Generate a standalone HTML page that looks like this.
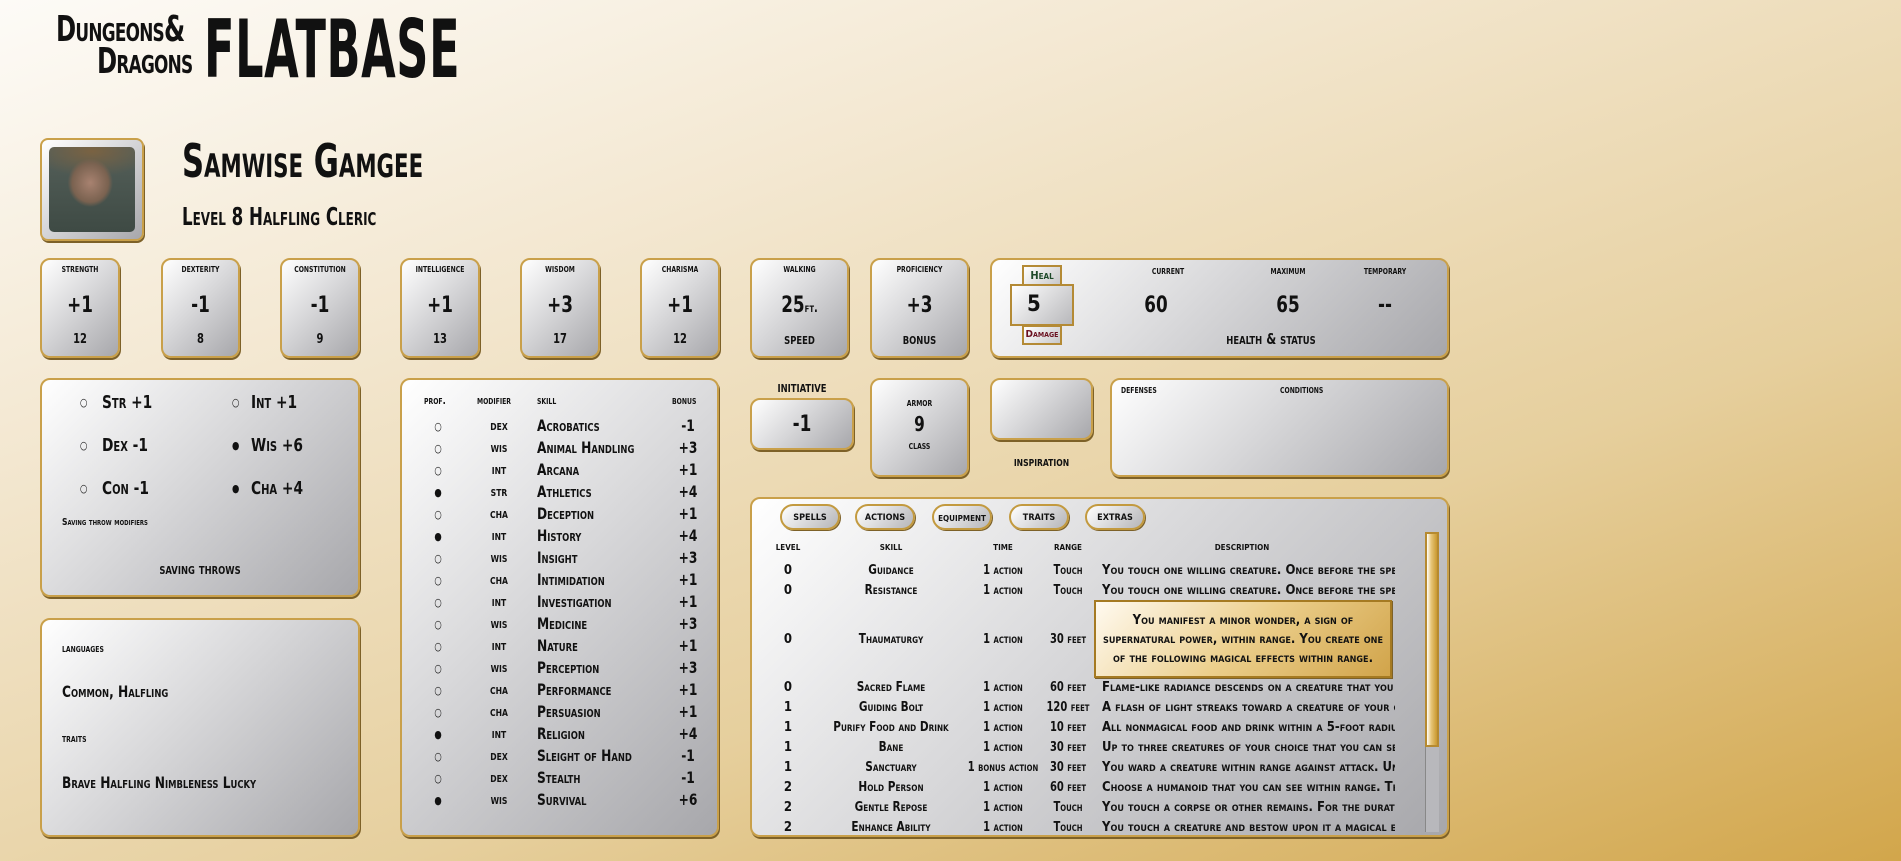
<!DOCTYPE html>
<html><head><meta charset="utf-8"><style>
*{margin:0;padding:0;box-sizing:border-box}
body{width:1901px;height:861px;overflow:hidden;position:relative;
background:linear-gradient(160deg,#fdfbf7 0%,#f3e7d0 30%,#e6cf9d 65%,#d2a64b 100%);
font-family:"Liberation Sans Narrow","DejaVu Sans Condensed","Liberation Sans",sans-serif;font-weight:bold;font-variant:small-caps;color:#111}
.a{position:absolute}
.box{position:absolute;border:2px solid #c9a04a;border-radius:10px;
background:linear-gradient(135deg,#ffffff 0%,#d8d8da 45%,#a7a7ab 100%);
box-shadow:1px 2px 0 #7d6128}
.c{position:absolute;text-align:center;white-space:nowrap;transform:scaleX(.85)}
.t{position:absolute;white-space:nowrap;transform:scaleX(.85);transform-origin:left}
.pill{position:absolute;top:504px;height:26px;width:60px;border:2px solid #c39a3f;border-radius:13px;background:linear-gradient(135deg,#fff,#b5b5b8);box-shadow:1px 1px 0 #7d6128;font-size:13px;text-align:center;line-height:22px}
.sr div{position:absolute;font-size:13px;white-space:nowrap;line-height:20px}
</style></head><body>

<div class="t" style="left:56px;top:14px;font-size:36px;line-height:32px;letter-spacing:-1px;transform:scaleX(.75)">Dungeons&amp;</div>
<div class="t" style="left:97px;top:46px;font-size:36px;line-height:32px;letter-spacing:-1px;transform:scaleX(.75)">Dragons</div>
<div class="t" style="left:204px;top:10px;font-size:80px;line-height:80px;font-variant:normal;transform:scaleX(.62);letter-spacing:1px">FLATBASE</div>

<div class="box" style="left:40px;top:138px;width:104px;height:103px;border-radius:8px;padding:7px">
<div style="width:100%;height:100%;border-radius:5px;background:radial-gradient(ellipse 35% 38% at 48% 42%,#a88270 0%,#7a6250 60%,transparent 75%),radial-gradient(ellipse 70% 30% at 50% 5%,#7a6242,transparent),linear-gradient(#55605a,#3e4a44)"></div></div>
<div class="t" style="left:182px;top:134px;font-size:46px;transform:scaleX(.74)">Samwise Gamgee</div>
<div class="t" style="left:182px;top:202px;font-size:25px;transform:scaleX(.74)">Level 8 Halfling Cleric</div>

<!-- stats -->
<div class="box" style="left:40px;top:258px;width:80px;height:100px"><div class="c" style="left:0;right:0;top:1px;font-size:12px">strength</div><div class="c" style="left:0;right:0;top:33px;font-size:22px">+1</div><div class="c" style="left:0;right:0;top:72px;font-size:13px">12</div></div>
<div class="box" style="left:161px;top:258px;width:79px;height:100px"><div class="c" style="left:0;right:0;top:1px;font-size:12px">dexterity</div><div class="c" style="left:0;right:0;top:33px;font-size:22px">-1</div><div class="c" style="left:0;right:0;top:72px;font-size:13px">8</div></div>
<div class="box" style="left:280px;top:258px;width:80px;height:100px"><div class="c" style="left:0;right:0;top:1px;font-size:12px">constitution</div><div class="c" style="left:0;right:0;top:33px;font-size:22px">-1</div><div class="c" style="left:0;right:0;top:72px;font-size:13px">9</div></div>
<div class="box" style="left:400px;top:258px;width:80px;height:100px"><div class="c" style="left:0;right:0;top:1px;font-size:12px">intelligence</div><div class="c" style="left:0;right:0;top:33px;font-size:22px">+1</div><div class="c" style="left:0;right:0;top:72px;font-size:13px">13</div></div>
<div class="box" style="left:520px;top:258px;width:80px;height:100px"><div class="c" style="left:0;right:0;top:1px;font-size:12px">wisdom</div><div class="c" style="left:0;right:0;top:33px;font-size:22px">+3</div><div class="c" style="left:0;right:0;top:72px;font-size:13px">17</div></div>
<div class="box" style="left:640px;top:258px;width:80px;height:100px"><div class="c" style="left:0;right:0;top:1px;font-size:12px">charisma</div><div class="c" style="left:0;right:0;top:33px;font-size:22px">+1</div><div class="c" style="left:0;right:0;top:72px;font-size:13px">12</div></div>
<div class="box" style="left:750px;top:258px;width:99px;height:100px"><div class="c" style="left:0;right:0;top:1px;font-size:12px">walking</div><div class="c" style="left:0;right:0;top:33px;font-size:22px">25<span style="font-size:13px">ft.</span></div><div class="c" style="left:0;right:0;top:70px;font-size:15px">speed</div></div>
<div class="box" style="left:870px;top:258px;width:99px;height:100px"><div class="c" style="left:0;right:0;top:1px;font-size:12px">proficiency</div><div class="c" style="left:0;right:0;top:33px;font-size:22px">+3</div><div class="c" style="left:0;right:0;top:70px;font-size:15px">bonus</div></div>
<div class="box" style="left:990px;top:258px;width:459px;height:100px">
<div class="c" style="left:136px;width:80px;top:3px;font-size:12px">current</div>
<div class="c" style="left:256px;width:80px;top:3px;font-size:12px">maximum</div>
<div class="c" style="left:353px;width:80px;top:3px;font-size:12px">temporary</div>
<div class="c" style="left:144px;width:40px;top:33px;font-size:22px">60</div>
<div class="c" style="left:276px;width:40px;top:33px;font-size:22px">65</div>
<div class="c" style="left:373px;width:40px;top:33px;font-size:22px">--</div>
<div class="c" style="left:199px;width:160px;top:70px;font-size:15px">health &amp; status</div>
</div>
<div class="a" style="left:1022px;top:265px;width:40px;height:21px;border:2px solid #b48a35;background:linear-gradient(135deg,#fff,#c8c8ca);font-size:11px;color:#1f4a2a;text-align:center;line-height:17px">Heal</div>
<div class="a" style="left:1022px;top:325px;width:40px;height:20px;border:2px solid #b48a35;background:linear-gradient(135deg,#fff,#c8c8ca);font-size:10px;color:#6a1020;text-align:center;line-height:16px">Damage</div>
<div class="a" style="left:1010px;top:284px;width:64px;height:42px;border:2px solid #b48a35;background:linear-gradient(135deg,#fff,#b8b8bb);font-size:22px;padding-left:15px;line-height:38px">5</div>

<!-- saving throws -->
<div class="box" style="left:40px;top:378px;width:320px;height:219px">
<div class="t" style="left:38px;top:16px;font-size:11px">○</div><div class="t" style="left:60px;top:12px;font-size:18px">Str +1</div>
<div class="t" style="left:190px;top:16px;font-size:11px">○</div><div class="t" style="left:209px;top:12px;font-size:18px">Int +1</div>
<div class="t" style="left:38px;top:59px;font-size:11px">○</div><div class="t" style="left:60px;top:55px;font-size:18px">Dex -1</div>
<div class="t" style="left:190px;top:59px;font-size:11px">●</div><div class="t" style="left:209px;top:55px;font-size:18px">Wis +6</div>
<div class="t" style="left:38px;top:102px;font-size:11px">○</div><div class="t" style="left:60px;top:98px;font-size:18px">Con -1</div>
<div class="t" style="left:190px;top:102px;font-size:11px">●</div><div class="t" style="left:209px;top:98px;font-size:18px">Cha +4</div>
<div class="t" style="left:20px;top:137px;font-size:10px">Saving throw modifiers</div>
<div class="c" style="left:0;right:0;top:180px;font-size:15px">saving throws</div>
</div>

<div class="box" style="left:40px;top:618px;width:320px;height:219px">
<div class="t" style="left:20px;top:21px;font-size:12px">languages</div>
<div class="t" style="left:20px;top:62px;font-size:16px">Common, Halfling</div>
<div class="t" style="left:20px;top:111px;font-size:12px">traits</div>
<div class="t" style="left:20px;top:153px;font-size:16px">Brave Halfling Nimbleness Lucky</div>
</div>

<!-- skills -->
<div class="box" style="left:400px;top:378px;width:319px;height:459px">
<div class="t" style="left:22px;top:14px;font-size:11px">prof.</div>
<div class="t" style="left:75px;top:14px;font-size:11px">modifier</div>
<div class="t" style="left:135px;top:14px;font-size:11px">skill</div>
<div class="t" style="left:270px;top:14px;font-size:11px">bonus</div>
<div id="sk"></div>
</div>

<div class="c" style="left:750px;width:104px;top:378px;font-size:15px">initiative</div>
<div class="box" style="left:750px;top:398px;width:104px;height:52px"><div class="c" style="left:0;right:0;top:12px;font-size:22px">-1</div></div>
<div class="box" style="left:870px;top:378px;width:99px;height:99px"><div class="c" style="left:0;right:0;top:15px;font-size:12px">armor</div><div class="c" style="left:0;right:0;top:32px;font-size:20px">9</div><div class="c" style="left:0;right:0;top:58px;font-size:12px">class</div></div>
<div class="box" style="left:990px;top:378px;width:103px;height:62px"></div>
<div class="c" style="left:990px;width:103px;top:454px;font-size:14px">inspiration</div>
<div class="box" style="left:1110px;top:378px;width:339px;height:99px"><div class="t" style="left:9px;top:3px;font-size:11px">defenses</div><div class="t" style="left:168px;top:3px;font-size:11px">conditions</div></div>

<!-- spells -->
<div class="box" style="left:750px;top:497px;width:699px;height:340px;overflow:hidden">
<div class="a" style="left:673px;top:33px;width:14px;height:300px;background:#b8b8bc;border-left:1px solid #888"></div>
<div class="a" style="left:673px;top:33px;width:14px;height:215px;background:linear-gradient(90deg,#fff,#e8c77a 40%,#c9982f);border:2px solid #b68a30"></div>
<div class="sr" id="sp"></div>
</div>
<div class="pill" style="left:780px">spells</div>
<div class="pill" style="left:855px">actions</div>
<div class="pill" style="left:932px;font-size:12px">equipment</div>
<div class="pill" style="left:1009px">traits</div>
<div class="pill" style="left:1085px">extras</div>

<div class="a" style="left:1094px;top:600px;width:298px;height:78px;border:2px solid #a57a22;background:linear-gradient(135deg,#fffaf0,#eccf8c 50%,#d1a44a);box-shadow:1px 1px 0 #7d6128;font-size:13px;text-align:center;line-height:19px;padding-top:9px">You manifest a minor wonder, a sign of<br>supernatural power, within range. You create one<br>of the following magical effects within range.</div>

<script>
var sk=[["○","dex","Acrobatics","-1"],["○","wis","Animal Handling","+3"],["○","int","Arcana","+1"],["●","str","Athletics","+4"],["○","cha","Deception","+1"],["●","int","History","+4"],["○","wis","Insight","+3"],["○","cha","Intimidation","+1"],["○","int","Investigation","+1"],["○","wis","Medicine","+3"],["○","int","Nature","+1"],["○","wis","Perception","+3"],["○","cha","Performance","+1"],["○","cha","Persuasion","+1"],["●","int","Religion","+4"],["○","dex","Sleight of Hand","-1"],["○","dex","Stealth","-1"],["●","wis","Survival","+6"]];
var h="";sk.forEach(function(r,i){var y=38+i*22;
h+='<div class="c" style="left:26px;width:20px;top:'+(y+2)+'px;font-size:11px">'+r[0]+'</div>'+
'<div class="c" style="left:77px;width:40px;top:'+y+'px;font-size:14px">'+r[1]+'</div>'+
'<div class="t" style="left:135px;top:'+(y-2)+'px;font-size:16px">'+r[2]+'</div>'+
'<div class="c" style="left:266px;width:40px;top:'+(y-2)+'px;font-size:16px">'+r[3]+'</div>';});
document.getElementById("sk").innerHTML=h;
var sp=[["0","Guidance","1 action","Touch","You touch one willing creature. Once before the spell ends"],["0","Resistance","1 action","Touch","You touch one willing creature. Once before the spell ends"],["0","Thaumaturgy","1 action","30 feet",""],["0","Sacred Flame","1 action","60 feet","Flame-like radiance descends on a creature that you can see"],["1","Guiding Bolt","1 action","120 feet","A flash of light streaks toward a creature of your choice"],["1","Purify Food and Drink","1 action","10 feet","All nonmagical food and drink within a 5-foot radius"],["1","Bane","1 action","30 feet","Up to three creatures of your choice that you can see"],["1","Sanctuary","1 bonus action","30 feet","You ward a creature within range against attack. Until"],["2","Hold Person","1 action","60 feet","Choose a humanoid that you can see within range. The target"],["2","Gentle Repose","1 action","Touch","You touch a corpse or other remains. For the duration"],["2","Enhance Ability","1 action","Touch","You touch a creature and bestow upon it a magical enhancement"]];
var ys=[62,82,131,179,199,219,239,259,279,299,319];
var g='<div style="left:16px;width:40px;top:37px;text-align:center;font-size:12px">level</div><div style="left:119px;width:40px;top:37px;text-align:center;font-size:12px">skill</div><div style="left:231px;width:40px;top:37px;text-align:center;font-size:12px">time</div><div style="left:296px;width:40px;top:37px;text-align:center;font-size:12px">range</div><div style="left:450px;width:80px;top:37px;text-align:center;font-size:12px">description</div>';
sp.forEach(function(r,i){var y=ys[i];
g+='<div style="left:16px;width:40px;top:'+y+'px;text-align:center">'+r[0]+'</div>'+
'<div style="left:59px;width:160px;top:'+y+'px;text-align:center;transform:scaleX(.9)">'+r[1]+'</div>'+
'<div style="left:201px;width:100px;top:'+y+'px;text-align:center;transform:scaleX(.85)">'+r[2]+'</div>'+
'<div style="left:286px;width:60px;top:'+y+'px;text-align:center;transform:scaleX(.85)">'+r[3]+'</div>'+
'<div style="left:350px;width:293px;overflow:hidden;top:'+y+'px">'+r[4]+'</div>';});
document.getElementById("sp").innerHTML=g;
</script>
</body></html>
